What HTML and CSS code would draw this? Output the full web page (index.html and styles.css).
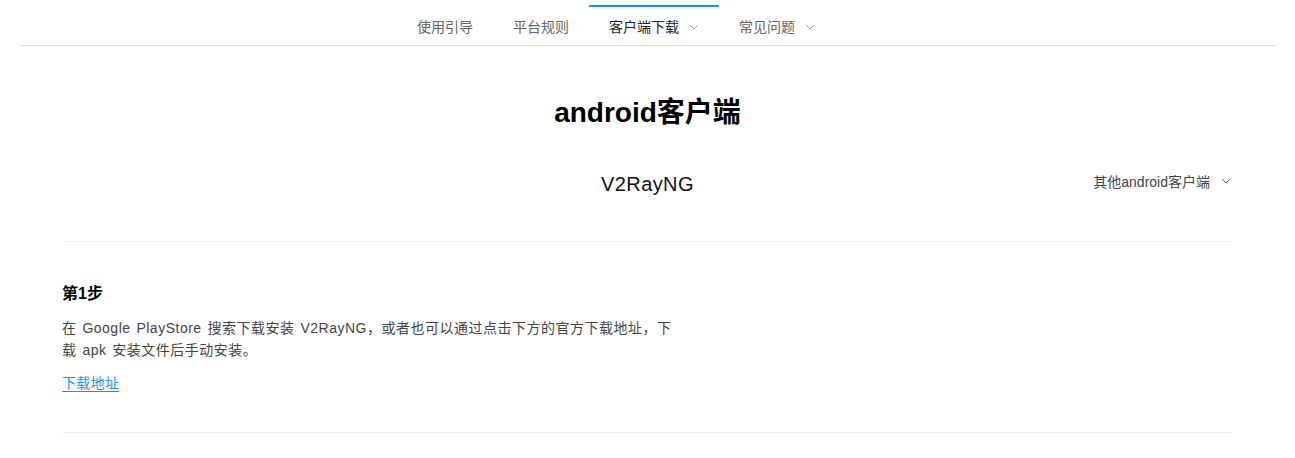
FILE: index.html
```html
<!DOCTYPE html>
<html lang="zh-CN">
<head>
<meta charset="utf-8">
<title>android客户端</title>
<link rel="stylesheet" href="styles.css">
</head>
<body>
<header class="nav">
  <ul class="menu">
    <li class="menu-item">使用引导</li>
    <li class="menu-item">平台规则</li>
    <li class="menu-item active">客户端下载<svg class="chev" viewBox="0 0 10 6" width="10" height="6"><path d="M1 1l4 4 4-4" fill="none" stroke="currentColor" stroke-width="1"/></svg></li>
    <li class="menu-item">常见问题<svg class="chev" viewBox="0 0 10 6" width="10" height="6"><path d="M1 1l4 4 4-4" fill="none" stroke="currentColor" stroke-width="1"/></svg></li>
  </ul>
</header>
<main class="content">
  <h1 class="title">android客户端</h1>
  <div class="client-bar">
    <div class="client-name">V2RayNG</div>
    <div class="other">其他android客户端<svg class="chev" viewBox="0 0 10 6" width="10" height="6"><path d="M1 1l4 4 4-4" fill="none" stroke="currentColor" stroke-width="1"/></svg></div>
  </div>
  <hr class="divider">
  <section class="step">
    <h3 class="step-title">第1步</h3>
    <p class="step-text">在 Google PlayStore 搜索下载安装 V2RayNG，或者也可以通过点击下方的官方下载地址，下载 apk 安装文件后手动安装。</p>
    <a class="step-link" href="#">下载地址</a>
  </section>
  <hr class="divider">
</main>
</body>
</html>
```
FILE: styles.css
```css
* { box-sizing: border-box; }
html, body { margin: 0; padding: 0; background: #fff; }
body {
  font-family: "Liberation Sans", Arial, "Noto Sans CJK SC", sans-serif;
  color: #333;
  padding: 0 19px;
}
.nav {
  border-bottom: 1px solid #dcdcdc;
  padding-top: 5px;
}
.menu {
  list-style: none;
  margin: 0;
  padding: 0 63px 0 0;
  display: flex;
  justify-content: center;
}
.menu-item {
  height: 40px;
  padding: 0 20px;
  border-top: 2px solid transparent;
  display: flex;
  align-items: center;
  gap: 10px;
  font-size: 14px;
  color: #666;
}
.menu-item.active {
  border-top-color: #1890ff;
  color: #222;
}
.menu-item .chev { color: #999; margin-top: 1px; }
.content {
  padding: 0 43px;
}
.title {
  margin: 0;
  padding-top: 49px;
  text-align: center;
  font-size: 28px;
  line-height: 36px;
  font-weight: bold;
  color: #000;
}
.client-bar {
  position: relative;
  margin-top: 39px;
  height: 28px;
  display: flex;
  justify-content: center;
  align-items: center;
}
.client-name {
  font-size: 20px;
  letter-spacing: 0.4px;
  color: #111;
}
.other {
  position: absolute;
  right: 2px;
  top: 1px;
  display: flex;
  align-items: center;
  gap: 11px;
  font-size: 14px;
  color: #444;
}
.other .chev { color: #666; }
.divider {
  border: 0;
  border-top: 1px solid #ececec;
  margin: 0;
}
.client-bar + .divider { margin-top: 43px; }
.step {
  padding-top: 40px;
  padding-bottom: 38px;
}
.step-title {
  margin: 0;
  font-size: 16px;
  line-height: 24px;
  font-weight: bold;
  color: #000;
}
.step-text {
  margin: 11px 0 0;
  width: 622px;
  font-size: 14px;
  line-height: 22px;
  letter-spacing: 0.5px;
  word-spacing: 1.5px;
  color: #444;
}
.step-link {
  display: inline-block;
  margin-top: 11px;
  font-size: 14px;
  line-height: 22px;
  letter-spacing: 0.3px;
  color: #1890ff;
  text-decoration: underline;
  text-underline-offset: 3px;
}
```
